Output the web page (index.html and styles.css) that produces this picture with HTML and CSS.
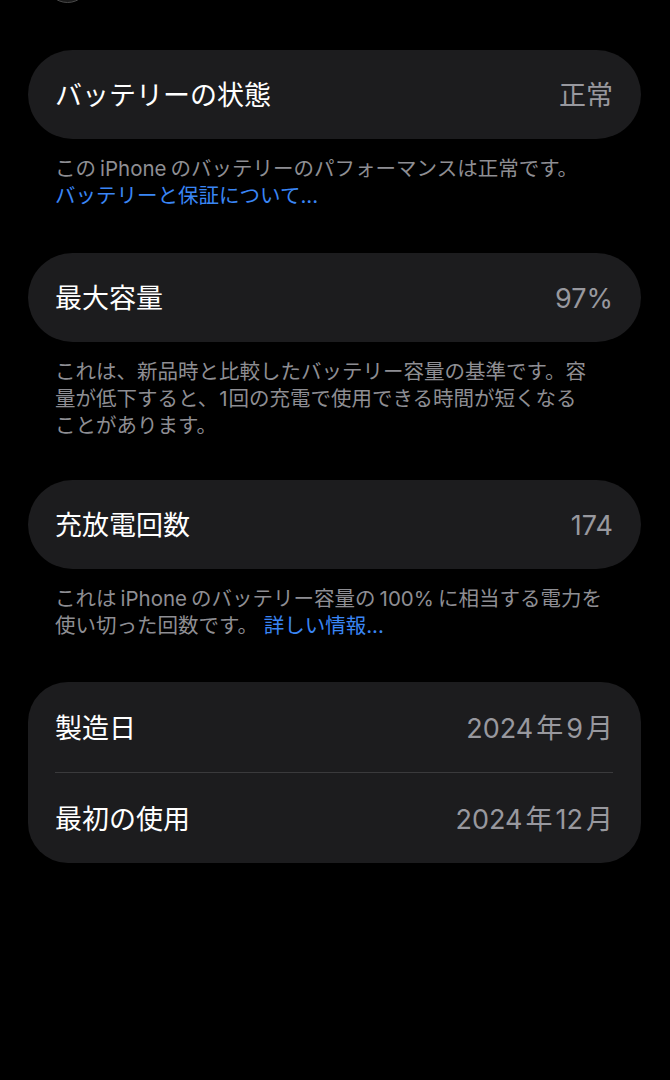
FILE: index.html
```html
<!DOCTYPE html>
<html lang="ja">
<head>
<meta charset="utf-8">
<link rel="stylesheet" href="styles.css">
</head>
<body>
<div class="back-btn"></div>
<main class="page">
  <section class="card pill">
    <div class="row"><span class="label">バッテリーの状態</span><span class="value">正常</span></div>
  </section>
  <p class="note">この<span class="lat">iPhone</span>のバッテリーのパフォーマンスは正常です。<br><span class="link">バッテリーと保証について...</span></p>

  <section class="card pill">
    <div class="row"><span class="label">最大容量</span><span class="value">97%</span></div>
  </section>
  <p class="note note-long">これは、新品時と比較したバッテリー容量の基準です。容<br>量が低下すると、<span class="lat-tight">1</span>回の充電で使用できる時間が短くなる<br>ことがあります。</p>

  <section class="card pill">
    <div class="row"><span class="label">充放電回数</span><span class="value">174</span></div>
  </section>
  <p class="note note-last">これは<span class="lat">iPhone</span>のバッテリー容量の<span class="lat">100%</span>に相当する電力を<br>使い切った回数です。 <span class="link">詳しい情報...</span></p>

  <section class="card group">
    <div class="row"><span class="label">製造日</span><span class="value"><span class="num">2024</span>年<span class="num">9</span>月</span></div>
    <div class="divider"></div>
    <div class="row"><span class="label">最初の使用</span><span class="value"><span class="num">2024</span>年<span class="num">12</span>月</span></div>
  </section>
</main>
</body>
</html>
```

FILE: styles.css
```css
* { box-sizing: border-box; }
html, body {
  margin: 0;
  padding: 0;
  background: #000;
}
body {
  width: 670px;
  height: 1080px;
  overflow: hidden;
  position: relative;
  font-family: Inter, "Noto Sans CJK JP", "Noto Sans", sans-serif;
  color: #fff;
}
.back-btn {
  position: absolute;
  left: 45px;
  top: -42px;
  width: 45px;
  height: 45px;
  border-radius: 50%;
  background: #1a1a1a;
  border: 1px solid #4a4a4a;
}
.page {
  display: flex;
  flex-direction: column;
  padding: 50px 29px 0 28px;
}
.card {
  background: #1c1c1e;
  padding: 0 28px 0 27px;
}
.pill {
  border-radius: 45px;
}
.group {
  border-radius: 40px;
}
.row {
  height: 89px;
  display: flex;
  align-items: center;
  justify-content: space-between;
  padding-top: 2px;
}
.group .row {
  height: 90px;
}
.label {
  font-size: 27px;
  line-height: 1;
  color: #fff;
}
.value {
  font-size: 27px;
  line-height: 1;
  color: #98989e;
}
.num {
  margin: 0 3px;
}
.num:first-child {
  margin-left: 0;
}
.divider {
  height: 1px;
  background: #3a3a3c;
}
.note {
  margin: 16px 0 44px 27px;
  font-size: 20.5px;
  line-height: 27px;
  color: #8e8e93;
  white-space: nowrap;
}
.note-long {
  margin-bottom: 41px;
}
.note-last {
  margin-bottom: 43px;
}
.lat {
  margin: 0 4px;
}
.lat-tight {
  margin: 0 1px;
}
.link {
  color: #3a86f5;
}
```
